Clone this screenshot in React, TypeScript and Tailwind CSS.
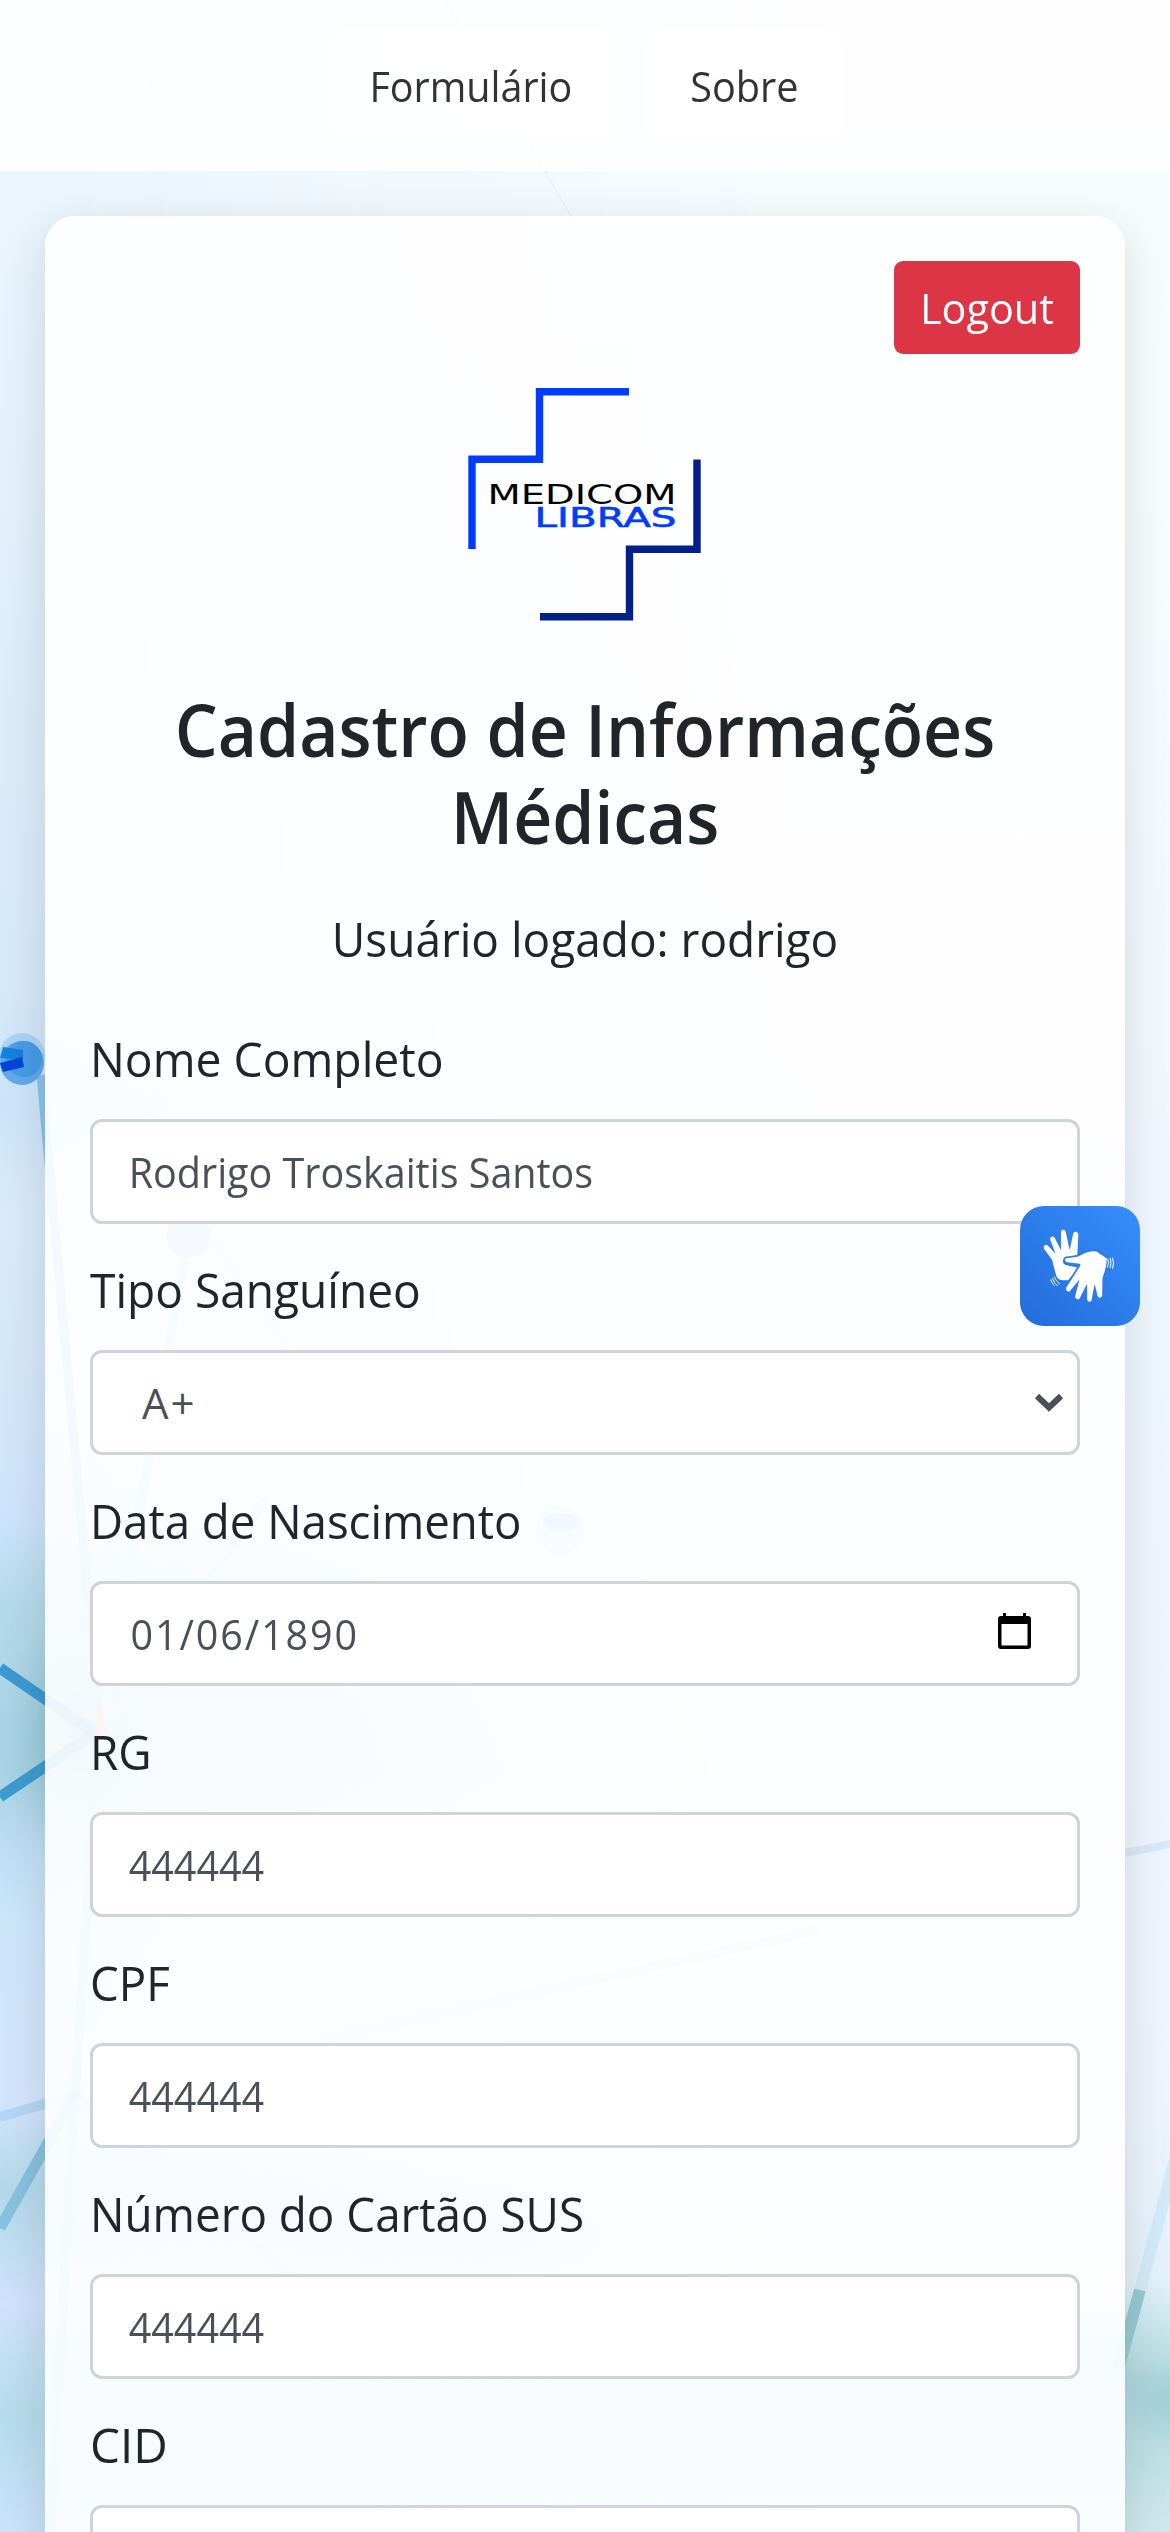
import type { ReactNode } from "react";

function Backdrop() {
  return (
    <svg className="absolute inset-0 h-[2532px] w-[1170px]" viewBox="0 0 1170 2532" aria-hidden="true">
      <defs>
        <linearGradient id="left" x1="0" y1="0" x2="0" y2="1">
          <stop offset="0" stopColor="#eff8ff" />
          <stop offset="0.12" stopColor="#e8f4fd" />
          <stop offset="0.28" stopColor="#dcedfa" />
          <stop offset="0.39" stopColor="#d5e9f9" />
          <stop offset="0.436" stopColor="#cbe4fa" />
          <stop offset="0.48" stopColor="#d9ebf9" />
          <stop offset="0.55" stopColor="#d3e7fa" />
          <stop offset="0.6" stopColor="#cce4fb" />
          <stop offset="0.635" stopColor="#b3d9ea" />
          <stop offset="0.7" stopColor="#a8d3e4" />
          <stop offset="0.735" stopColor="#c2dff5" />
          <stop offset="0.76" stopColor="#cce6fa" />
          <stop offset="0.83" stopColor="#d2e5fc" />
          <stop offset="0.865" stopColor="#b3d8ea" />
          <stop offset="0.91" stopColor="#cfe3fb" />
          <stop offset="0.955" stopColor="#b6dcec" />
          <stop offset="1" stopColor="#cbe3fb" />
        </linearGradient>
        <linearGradient id="right" x1="0" y1="0" x2="0" y2="1">
          <stop offset="0" stopColor="#f8fcfe" />
          <stop offset="0.25" stopColor="#f6fbfe" />
          <stop offset="0.5" stopColor="#eef6fe" />
          <stop offset="0.83" stopColor="#edf4fe" />
          <stop offset="0.9" stopColor="#e3f1fa" />
          <stop offset="0.94" stopColor="#afd8dc" />
          <stop offset="1" stopColor="#cfe8ee" />
        </linearGradient>
        <linearGradient id="fade" x1="0" y1="0" x2="1" y2="0">
          <stop offset="0" stopColor="#000" />
          <stop offset="0.04" stopColor="#0a0a0a" />
          <stop offset="0.7" stopColor="#fff" />
        </linearGradient>
        <mask id="fadeMask">
          <rect width="1170" height="2532" fill="url(#fade)" />
        </mask>
        <radialGradient id="teal">
          <stop offset="0" stopColor="#7fbccb" stopOpacity="0.9" />
          <stop offset="1" stopColor="#9ccbdc" stopOpacity="0" />
        </radialGradient>
      </defs>
      <rect width="1170" height="2532" fill="url(#left)" />
      <rect width="1170" height="2532" fill="url(#right)" mask="url(#fadeMask)" />
      <ellipse cx="80" cy="1730" rx="85" ry="130" fill="url(#teal)" />
      <ellipse cx="460" cy="2240" rx="260" ry="60" fill="url(#teal)" opacity="0.3" />
      <ellipse cx="1180" cy="2405" rx="70" ry="50" fill="url(#teal)" opacity="0.5" />
      <g fill="none">
        <path d="M0 1668L96 1734" stroke="#3c98d2" strokeWidth="11" />
        <path d="M0 1797L96 1732" stroke="#3d9bcf" strokeWidth="11" />
        <path d="M41 1075L100 1730" stroke="#8cc2ec" strokeWidth="9" />
        <path d="M188 1240L100 1730" stroke="#a9d2f3" strokeWidth="9" />
        <path d="M205 1230L290 1350" stroke="#cfe4f6" strokeWidth="7" />
        <path d="M265 1500L100 1735" stroke="#b3d7f2" strokeWidth="9" />
        <path d="M98 1740L75 2095L50 2532" stroke="#9dcbe8" strokeWidth="10" />
        <path d="M0 2117L75 2095" stroke="#b2d6f4" strokeWidth="10" />
        <path d="M0 2228L75 2095" stroke="#86c1de" strokeWidth="11" />
        <path d="M75 2095L570 2508" stroke="#b4d4ea" strokeWidth="11" />
        <path d="M320 2040L820 1930" stroke="#cbe1f2" strokeWidth="9" />
        <path d="M1120 1854L1170 1844" stroke="#d9e8f8" strokeWidth="8" />
        <path d="M1175 2160L1140 2290" stroke="#d3e9f8" strokeWidth="12" />
        <path d="M1140 2290L1118 2370" stroke="#96c9d2" strokeWidth="12" />
        <path d="M445 0L585 240" stroke="#e9f3f6" strokeWidth="1.5" />
      </g>
      <circle cx="75" cy="2095" r="6" fill="#8fb6de" />
      <path d="M100 1695L106 1732L100 1738L95 1732Z" fill="#e08a8a" />
      <circle cx="22" cy="1056" r="23" fill="#9bcaf0" opacity="0.7" />
      <circle cx="22" cy="1063" r="22" fill="#5faae8" />
      <circle cx="24" cy="1059" r="18" fill="#479be6" />
      <path d="M3 1047L23 1050V1060L0 1058Z" fill="#1182e0" />
      <path d="M0 1063L22 1057L24 1067L3 1072Z" fill="#0047d4" />
      <circle cx="188" cy="1236" r="22" fill="#a5cff5" />
      <circle cx="560" cy="1530" r="24" fill="#b9dcf2" />
      <ellipse cx="561" cy="1522" rx="18" ry="9" fill="#7fb9f2" />
    </svg>
  );
}

function Logo() {
  return (
    <svg className="mt-[30px] h-[240px] w-[240px] self-center" viewBox="465 384 240 240" role="img" aria-label="Medicom Libras">
      <g fill="none" strokeWidth="7.4">
        <path d="M629 391.7H539.5V459.3H472V549" stroke="#003cff" />
        <path d="M697 459.5V549.2H629.5V616.7H540" stroke="#00208c" />
      </g>
      <g fontFamily="'DejaVu Sans', sans-serif" fontSize="27.2">
        <text x="487.500" y="504.300" textLength="189" lengthAdjust="spacingAndGlyphs" fill="#000">MEDICOM</text>
        <text x="534.500" y="526.500" textLength="142" lengthAdjust="spacingAndGlyphs" fill="#003cff" stroke="#003cff" strokeWidth="0.6">LIBRAS</text>
      </g>
    </svg>
  );
}

function HandsIcon() {
  return (
    <svg className="h-24 w-[90px]" viewBox="0 0 270 288" aria-hidden="true">
      <path
        d="M32 92Q27 97 31 102L54 133L64 172Q68 193 82 193H98L134 152L112 118L124 118L127 58Q123 50 118 55L107 106H101L89 50Q85 45 81 50V106L77 110L56 69Q50 65 48 72L65 116L60 119L37 94Z"
        fill="#fff"
        stroke="#fff"
        strokeWidth="6"
        strokeLinejoin="round"
      />
      <path
        d="M94 132Q88 138 94 143Q112 148 138 151L126 172L95 219Q94 226 102 226L131 195L123 244Q126 252 133 247L153 202L160 254Q164 260 168 254L175 203L190 243Q195 248 198 242L202 188L212 152L214 130L184 110Q168 107 149 116L127 128Z"
        fill="none"
        stroke="#2c7be9"
        strokeWidth="15"
        strokeLinejoin="round"
      />
      <path
        d="M95 132Q90 136 96 139L135 144Q142 148 136 157L96 219Q94 227 102 227L132 191L136 193L123 244Q124 252 131 250L154 205H159L159 254Q163 260 167 256L177 204H181L190 242Q195 249 199 242L200 188Q209 165 211 149L213 132L184 112Q168 109 151 116L128 128Z"
        fill="#fff"
        stroke="#fff"
        strokeWidth="5"
        strokeLinejoin="round"
      />
      <path
        d="M219 132Q222 144 218 156M226 130Q230 145 226 158M233 129Q238 145 233 160M58 186Q63 199 74 207M52 190Q57 204 67 212M47 195Q50 204 57 211"
        fill="none"
        stroke="#fff"
        strokeWidth="3"
        strokeLinecap="round"
      />
    </svg>
  );
}

function NavItem({ children, className }: { children: ReactNode; className: string }) {
  return (
    <a className={`flex h-[111px] items-center justify-center rounded-[15px] bg-white/80 text-[42px] text-[#333] ${className}`}>
      {children}
    </a>
  );
}

function Field({ label, labelClass, children }: { label: string; labelClass: string; children: ReactNode }) {
  return (
    <div className="mb-[30px] flex flex-col gap-6">
      <label className={`origin-left self-start text-[48px] leading-[72px] ${labelClass}`}>{label}</label>
      <div className="flex h-[105px] items-center rounded-xl border-3 border-[#ced4da] bg-white text-[42px] text-[#495057]">
        {children}
      </div>
    </div>
  );
}

function TextValue({ value }: { value: string }) {
  return (
    <input
      className="h-full w-full origin-left scale-x-[0.94] bg-transparent pl-[38px] outline-none"
      defaultValue={value}
    />
  );
}

export default function App() {
  return (
    <div className="relative h-[2532px] w-[1170px] overflow-hidden font-['Open_Sans',sans-serif] text-[#212529]">
      <Backdrop />
      <div className="relative flex flex-col">
        <nav className="flex h-[171px] items-center justify-center gap-8 bg-white/80">
          <NavItem className="w-[286px]">
            <span className="scale-x-[0.94]">Formulário</span>
          </NavItem>
          <NavItem className="w-[196px]">
            <span className="scale-x-[0.944]">Sobre</span>
          </NavItem>
        </nav>
        <main className="mx-[45px] mt-[45px] flex h-[2500px] flex-col rounded-[30px] bg-white/90 p-[45px] shadow-[0_12px_45px_rgba(0,0,0,0.13)]">
          <button className="h-[93px] w-[186px] self-end rounded-[9px] bg-[#dc3545] text-[42px] text-white">
            <span className="inline-block scale-x-[0.985]">Logout</span>
          </button>
          <Logo />
          <h1 className="mt-[62px] scale-x-[0.941] text-center text-[72px] leading-[87px] font-semibold">
            Cadastro de Informações
            <br />
            Médicas
          </h1>
          <p className="mt-[43px] mb-12 scale-x-[0.958] text-center text-[48px] leading-[72px]">Usuário logado: rodrigo</p>
          <Field label="Nome Completo" labelClass="scale-x-[0.964]">
            <TextValue value="Rodrigo Troskaitis Santos" />
          </Field>
          <Field label="Tipo Sanguíneo" labelClass="scale-x-[0.96]">
            <span className="flex-1 pl-[49px] tracking-[2px]">A+</span>
            <svg className="mr-[13px] h-5 w-[30px]" viewBox="0 0 30 20" fill="none" aria-hidden="true">
              <path d="M3 3L15 14.500L27 3" stroke="#495057" strokeWidth="6" />
            </svg>
          </Field>
          <Field label="Data de Nascimento" labelClass="scale-x-[0.95]">
            <span className="origin-left scale-x-[0.94] pl-10 tracking-[2px]">01/06/1890</span>
            <svg className="mr-[46px] mb-1.5 ml-auto h-9 w-[33px]" viewBox="0 0 33 36" aria-hidden="true">
              <path fillRule="evenodd" d="M5 0h3v3h17V0h3v3h2q3 0 3 3v27q0 3-3 3H3q-3 0-3-3V6q0-3 3-3h2zM3.500 11v21.500h26V11z" />
            </svg>
          </Field>
          <Field label="RG" labelClass="scale-x-[0.955]">
            <TextValue value="444444" />
          </Field>
          <Field label="CPF" labelClass="scale-x-[0.95]">
            <TextValue value="444444" />
          </Field>
          <Field label="Número do Cartão SUS" labelClass="scale-x-[0.954]">
            <TextValue value="444444" />
          </Field>
          <Field label="CID" labelClass="scale-x-[0.99]">
            <TextValue value="" />
          </Field>
        </main>
      </div>
      <button
        className="absolute top-[1206px] left-[1020px] flex h-[120px] w-[120px] items-center justify-center rounded-3xl bg-linear-to-tr from-[#246bdb] to-[#368ffc] pb-1.5"
        aria-label="Libras"
      >
        <HandsIcon />
      </button>
    </div>
  );
}
